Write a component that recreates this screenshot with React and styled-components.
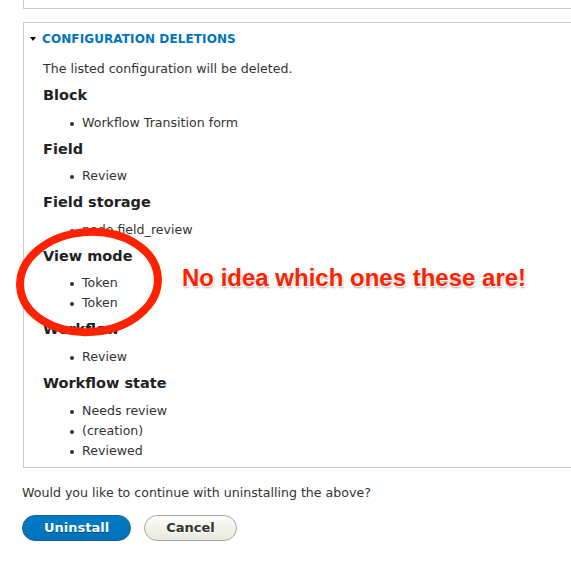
import styled, { createGlobalStyle } from "styled-components";

const Global = createGlobalStyle`
  html, body {
    margin: 0;
    padding: 0;
    background: #fff;
    overflow: hidden;
  }
  body {
    font-family: "DejaVu Sans", "Lucida Grande", sans-serif;
    color: #333;
  }
`;

const Page = styled.div`
  position: relative;
  width: 571px;
  height: 568px;
  overflow: hidden;
  padding-left: 23px;
  box-sizing: border-box;
`;

const PrevBox = styled.div`
  width: 620px;
  height: 8px;
  border-left: 1px solid #ccc;
  border-bottom: 1px solid #ccc;
`;

const Details = styled.div`
  width: 620px;
  margin-top: 13px;
  border: 1px solid #ccc;
  box-sizing: border-box;
`;

const Summary = styled.div`
  display: flex;
  align-items: center;
  height: 31px;
  padding-left: 6px;
  color: #0074bd;
  font-size: 12px;
  font-weight: bold;
  text-transform: uppercase;
  letter-spacing: 0.1px;
`;

const Caret = styled.span`
  width: 0;
  height: 0;
  border-left: 3px solid transparent;
  border-right: 3px solid transparent;
  border-top: 4px solid #000;
  margin-right: 6px;
`;

const Body = styled.div`
  padding: 5px 19px 6.4px;
`;

const Text = styled.p`
  margin: 0;
  font-size: 12.6px;
  line-height: 20px;
`;

const Heading = styled.h3`
  margin: 6.1px 0 0;
  font-size: 14.5px;
  line-height: 20px;
  font-weight: bold;
  color: #222;
`;

const List = styled.ul`
  margin: 7.5px 0 0;
  padding-left: 39px;
  list-style: none;
`;

const Item = styled.li`
  position: relative;
  font-size: 12.6px;
  line-height: 20px;

  &::before {
    content: "";
    position: absolute;
    left: -12px;
    top: 9px;
    width: 4px;
    height: 4px;
    border-radius: 50%;
    background: #333;
  }
`;

const Question = styled(Text)`
  margin-top: 15px;
  margin-left: -1px;
`;

const Actions = styled.div`
  display: flex;
  gap: 13px;
  margin-top: 12px;
  margin-left: -1px;
`;

const Button = styled.button`
  height: 26px;
  box-sizing: border-box;
  padding: 0 ${(p) => p.$pad}px;
  border-radius: 20px;
  font-family: "DejaVu Sans", sans-serif;
  font-size: 13px;
  font-weight: bold;
  cursor: pointer;
  color: ${(p) => (p.$primary ? "#fff" : "#333")};
  background: ${(p) =>
    p.$primary
      ? "linear-gradient(to bottom, #007bc6, #0071b8)"
      : "linear-gradient(to bottom, #fcfcfa, #e9e9dd)"};
  border: 1px solid ${(p) => (p.$primary ? "#1e5c90" : "#a6a6a6")};
  text-shadow: ${(p) =>
    p.$primary ? "0 1px 0 rgba(0,0,0,0.4)" : "0 1px 0 #fff"};
`;

const Circle = styled.svg`
  position: absolute;
  left: 14px;
  top: 226px;
`;

const Note = styled.div`
  position: absolute;
  left: 182px;
  top: 264px;
  font-family: "Liberation Sans", Arial, sans-serif;
  font-size: 24px;
  font-weight: bold;
  color: #ff2200;
  text-shadow: 1px 1px 0 #fff, 1px 2px 2px rgba(0, 0, 0, 0.35);
  white-space: nowrap;
`;

const sections = [
  { title: "Block", items: ["Workflow Transition form"] },
  { title: "Field", items: ["Review"] },
  { title: "Field storage", items: ["node.field_review"] },
  { title: "View mode", items: ["Token", "Token"] },
  { title: "Workflow", items: ["Review"] },
  { title: "Workflow state", items: ["Needs review", "(creation)", "Reviewed"] },
];

export default function App() {
  return (
    <>
      <Global />
      <Page>
        <PrevBox />
        <Details>
          <Summary>
            <Caret />
            Configuration deletions
          </Summary>
          <Body>
            <Text>The listed configuration will be deleted.</Text>
            {sections.map((s) => (
              <section key={s.title}>
                <Heading>{s.title}</Heading>
                <List>
                  {s.items.map((it, i) => (
                    <Item key={i}>{it}</Item>
                  ))}
                </List>
              </section>
            ))}
          </Body>
        </Details>
        <Question>Would you like to continue with uninstalling the above?</Question>
        <Actions>
          <Button $primary $pad={21}>Uninstall</Button>
          <Button $pad={21}>Cancel</Button>
        </Actions>
        <Circle width="152" height="114" viewBox="0 0 152 114">
          <ellipse
            cx="75"
            cy="56"
            rx="69"
            ry="50"
            fill="none"
            stroke="#ff2200"
            strokeWidth="8"
            transform="rotate(-4 75 56)"
          />
        </Circle>
        <Note>No idea which ones these are!</Note>
      </Page>
    </>
  );
}
